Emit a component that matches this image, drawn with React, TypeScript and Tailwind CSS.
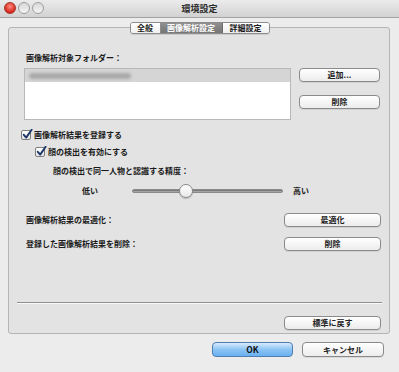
import React from "react";

const font = { fontFamily: '"Noto Sans CJK JP", "Noto Sans", sans-serif' };

function Btn({ children, className = "" }: { children: React.ReactNode; className?: string }) {
  return (
    <div
      className={
        "h-[14px] rounded-[4px] border border-[#8a8a8a] bg-gradient-to-b from-[#ffffff] to-[#ececec] shadow-[0_1px_0_rgba(0,0,0,0.08)] flex items-center justify-center text-[8px] leading-none font-bold text-[#222] " +
        className
      }
    >
      {children}
    </div>
  );
}

function Check() {
  return (
    <div className="relative w-[10px] h-[10px] rounded-[2px] border border-[#7d7d7d] bg-gradient-to-b from-white to-[#e6e6e6] shrink-0">
      <svg className="absolute -top-[2px] left-0" width="11" height="11" viewBox="0 0 11 11">
        <path d="M1.8 5.8 L4.2 8.6 L9.6 0.8" fill="none" stroke="#1c3769" strokeWidth="1.9" strokeLinecap="round" strokeLinejoin="round" />
      </svg>
    </div>
  );
}

export default function App() {
  return (
    <div style={font} className="w-[399px] h-[372px] bg-[#ececec] overflow-hidden text-[#1a1a1a]">
      {/* title bar */}
      <div className="relative h-[18px] bg-gradient-to-b from-[#ebebeb] to-[#d2d2d2] border-b border-[#a3a3a3] flex items-center justify-center">
        <div className="absolute left-[4px] top-[2px] flex gap-[2px]">
          <div className="w-[12px] h-[12px] rounded-full bg-[radial-gradient(circle_at_50%_35%,#ff8a80,#d7261a_70%)] border border-[#a4332a]" />
          <div className="w-[12px] h-[12px] rounded-full bg-gradient-to-b from-[#d8d8d8] to-[#f4f4f4] border border-[#9d9d9d]" />
          <div className="w-[12px] h-[12px] rounded-full bg-gradient-to-b from-[#d8d8d8] to-[#f4f4f4] border border-[#9d9d9d]" />
        </div>
        <span className="text-[9px] leading-none font-bold text-[#2a2a2a]">環境設定</span>
      </div>

      {/* tabs */}
      <div className="mt-[4px] flex justify-center relative z-10">
        <div className="flex h-[12px] rounded-[3px] border border-[#8c8c8c] overflow-hidden shadow-[0_1px_0_rgba(0,0,0,0.1)] text-[8px] font-bold leading-none">
          <div className="w-[30px] bg-gradient-to-b from-white to-[#f0f0f0] flex items-center justify-center border-r border-[#8c8c8c]">全般</div>
          <div className="w-[62px] bg-gradient-to-b from-[#8f8f8f] to-[#757575] text-white flex items-center justify-center border-r border-[#6d6d6d]">画像解析設定</div>
          <div className="w-[46px] bg-gradient-to-b from-white to-[#f0f0f0] flex items-center justify-center">詳細設定</div>
        </div>
      </div>

      {/* box */}
      <div className="ml-[8px] -mt-[7px] w-[382px] h-[307px] rounded-[3px] border border-[#b4b4b4] bg-[#e3e3e3] flex flex-col text-[8px] font-bold leading-none">
        <div className="ml-[17px] mt-[25px] h-[10px] flex items-center">画像解析対象フォルダー：</div>
        <div className="mt-[5px] flex">
          <div className="ml-[15px] w-[267px] h-[52px] bg-white border border-[#b8b8b8] flex flex-col">
            <div className="h-[13px] bg-[#d5d5d5] flex items-center pl-[4px]">
              <div className="w-[102px] h-[6px] rounded-full bg-[#a9a9a9] blur-[1.5px]" />
            </div>
          </div>
          <div className="ml-[8px] flex flex-col gap-[13px]">
            <Btn className="w-[81px]">追加...</Btn>
            <Btn className="w-[81px]">削除</Btn>
          </div>
        </div>
        <div className="ml-[12px] mt-[9px] h-[12px] flex items-center gap-[3px]">
          <Check />
          <span>画像解析結果を登録する</span>
        </div>
        <div className="ml-[26px] mt-[5px] h-[12px] flex items-center gap-[3px]">
          <Check />
          <span>顔の検出を有効にする</span>
        </div>
        <div className="ml-[44px] mt-[8px] h-[10px] flex items-center">顔の検出で同一人物と認識する精度：</div>
        <div className="mt-[8px] h-[14px] flex items-center">
          <span className="ml-[73px] w-[50px]">低い</span>
          <div className="relative w-[151px] h-[14px] flex items-center">
            <div className="w-full h-[4px] rounded-full bg-[#a9a9a9] border border-[#8a8a8a] shadow-[inset_0_1px_1px_rgba(0,0,0,0.3)]" />
            <div className="absolute left-[47px] top-0 w-[14px] h-[14px] rounded-full border border-[#8a8a8a] bg-gradient-to-b from-white to-[#e8e8e8] shadow-[0_1px_1px_rgba(0,0,0,0.2)]" />
          </div>
          <span className="ml-[10px]">高い</span>
        </div>
        <div className="mt-[15px] flex items-center h-[14px]">
          <span className="ml-[17px] w-[258px]">画像解析結果の最適化：</span>
          <Btn className="w-[97px]">最適化</Btn>
        </div>
        <div className="mt-[10px] flex items-center h-[14px]">
          <span className="ml-[17px] w-[258px]">登録した画像解析結果を削除：</span>
          <Btn className="w-[97px]">削除</Btn>
        </div>
        <div className="ml-[8px] mt-[51px] w-[365px] h-[2px] border-t border-[#8f8f8f] border-b border-b-[#f8f8f8]" />
        <div className="mt-[12px] flex">
          <Btn className="ml-[275px] w-[97px]">標準に戻す</Btn>
        </div>
      </div>

      {/* bottom buttons */}
      <div className="mt-[8px] flex text-[8.5px] font-bold leading-none">
        <div className="ml-[212px] w-[81px] h-[15px] rounded-[4px] border border-[#4f7eb0] bg-gradient-to-b from-[#d6ebfd] via-[#8cc4f4] to-[#6aaff0] flex items-center justify-center text-[#111]">OK</div>
        <Btn className="ml-[9px] w-[82px] !h-[15px] text-[8.5px]">キャンセル</Btn>
      </div>
    </div>
  );
}
